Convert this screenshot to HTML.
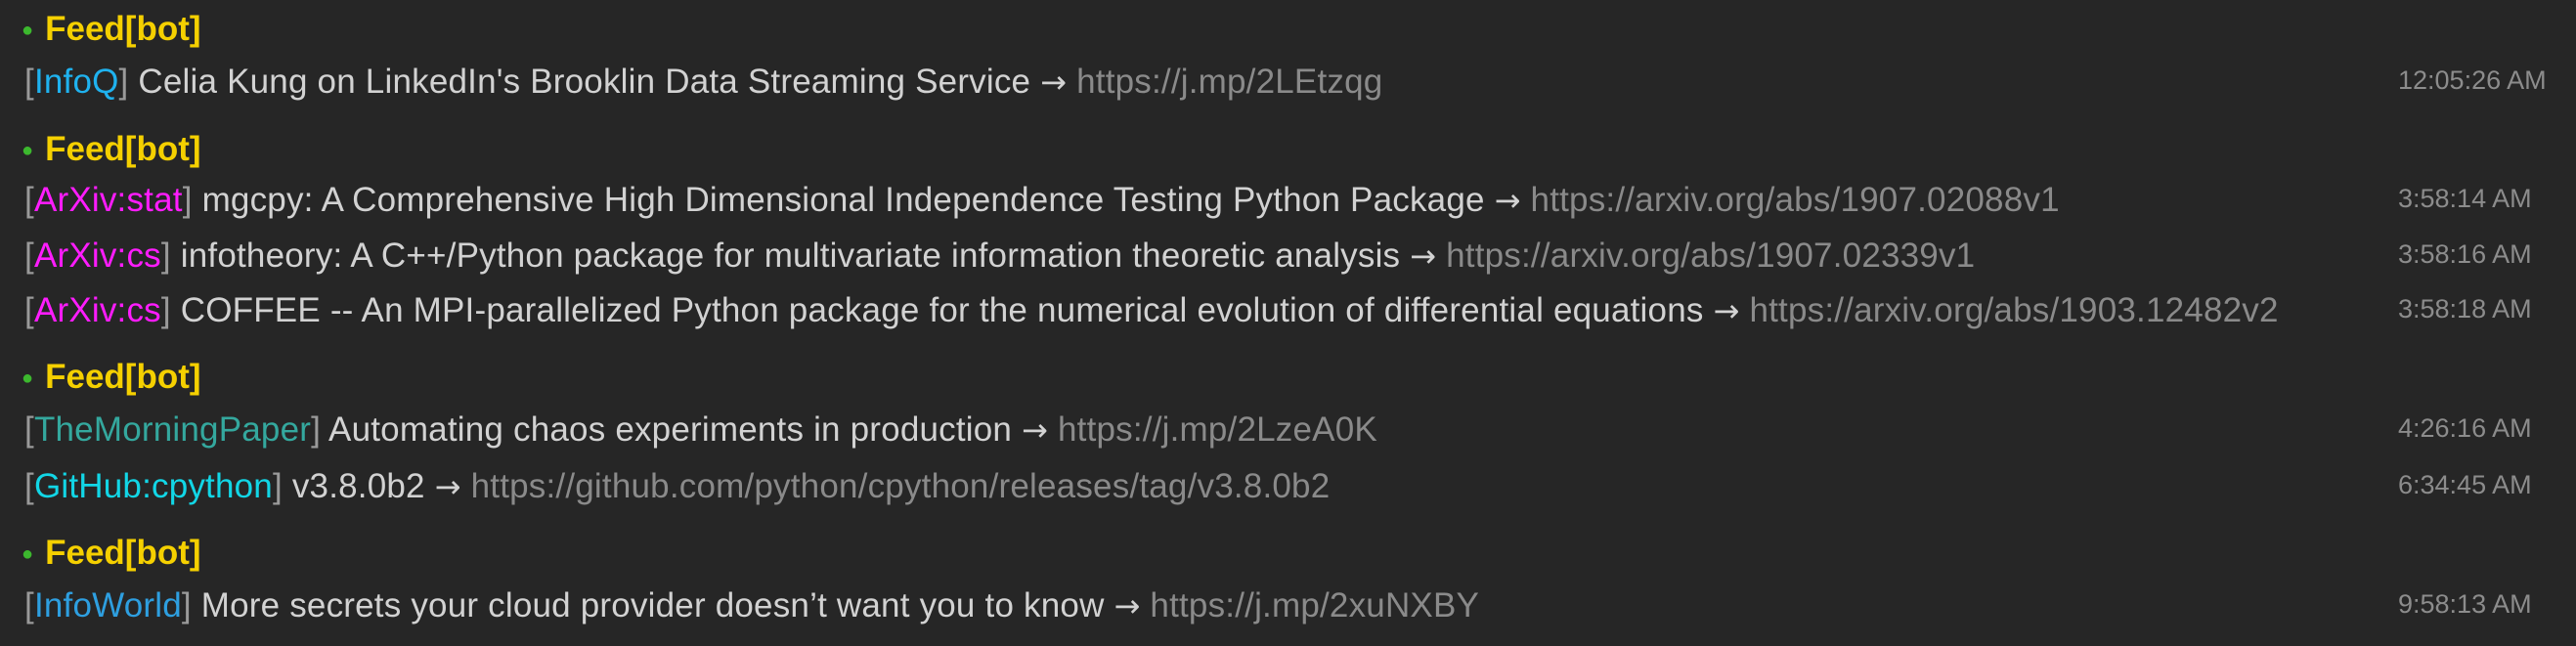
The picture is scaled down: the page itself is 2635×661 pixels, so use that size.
<!DOCTYPE html>
<html><head><meta charset="utf-8"><style>
body{margin:0;width:2635px;height:661px;background:#262626;overflow:hidden;font-family:"Liberation Sans",sans-serif;}
.r{position:absolute;left:25px;height:40px;line-height:40px;font-size:35px;color:#d2d2d2;white-space:nowrap;letter-spacing:0.2px}
.f{left:22px;color:#f5d000;font-weight:bold;font-size:35px;letter-spacing:0}
.f b{color:#3cb82e;font-size:20px;margin-right:12px;vertical-align:4px}
.t{position:absolute;left:2453px;height:40px;line-height:40px;font-size:27px;color:#8c8c8c}
.l{color:#8a8a8a}.br{color:#9a9a9a}
.ar{font-family:"DejaVu Sans",sans-serif;font-size:32px}
.q{color:#1fb2ef}.a{color:#ff1cff}.m{color:#34a89e}.g{color:#12d6e6}.w{color:#2e9fe0}
</style></head><body>
<div class="r f" style="top:10px"><b>●</b>Feed[bot]</div>
<div class="r" style="top:64px"><span class="br">[</span><span class="q">InfoQ</span><span class="br">]</span> Celia Kung on LinkedIn's Brooklin Data Streaming Service <span class="ar">→</span> <span class="l">https://j.mp/2LEtzqg</span></div>
<div class="t" style="top:62px">12:05:26 AM</div>
<div class="r f" style="top:133px"><b>●</b>Feed[bot]</div>
<div class="r" style="top:185px"><span class="br">[</span><span class="a">ArXiv:stat</span><span class="br">]</span> mgcpy: A Comprehensive High Dimensional Independence Testing Python Package <span class="ar">→</span> <span class="l">https://arxiv.org/abs/1907.02088v1</span></div>
<div class="t" style="top:183px">3:58:14 AM</div>
<div class="r" style="top:242px"><span class="br">[</span><span class="a">ArXiv:cs</span><span class="br">]</span> infotheory: A C++/Python package for multivariate information theoretic analysis <span class="ar">→</span> <span class="l">https://arxiv.org/abs/1907.02339v1</span></div>
<div class="t" style="top:240px">3:58:16 AM</div>
<div class="r" style="top:298px"><span class="br">[</span><span class="a">ArXiv:cs</span><span class="br">]</span> COFFEE -- An MPI-parallelized Python package for the numerical evolution of differential equations <span class="ar">→</span> <span class="l">https://arxiv.org/abs/1903.12482v2</span></div>
<div class="t" style="top:296px">3:58:18 AM</div>
<div class="r f" style="top:366px"><b>●</b>Feed[bot]</div>
<div class="r" style="top:420px"><span class="br">[</span><span class="m">TheMorningPaper</span><span class="br">]</span> Automating chaos experiments in production <span class="ar">→</span> <span class="l">https://j.mp/2LzeA0K</span></div>
<div class="t" style="top:418px">4:26:16 AM</div>
<div class="r" style="top:478px"><span class="br">[</span><span class="g">GitHub:cpython</span><span class="br">]</span> v3.8.0b2 <span class="ar">→</span> <span class="l">https://github.com/python/cpython/releases/tag/v3.8.0b2</span></div>
<div class="t" style="top:476px">6:34:45 AM</div>
<div class="r f" style="top:546px"><b>●</b>Feed[bot]</div>
<div class="r" style="top:600px"><span class="br">[</span><span class="w">InfoWorld</span><span class="br">]</span> More secrets your cloud provider doesn’t want you to know <span class="ar">→</span> <span class="l">https://j.mp/2xuNXBY</span></div>
<div class="t" style="top:598px">9:58:13 AM</div>
</body></html>
